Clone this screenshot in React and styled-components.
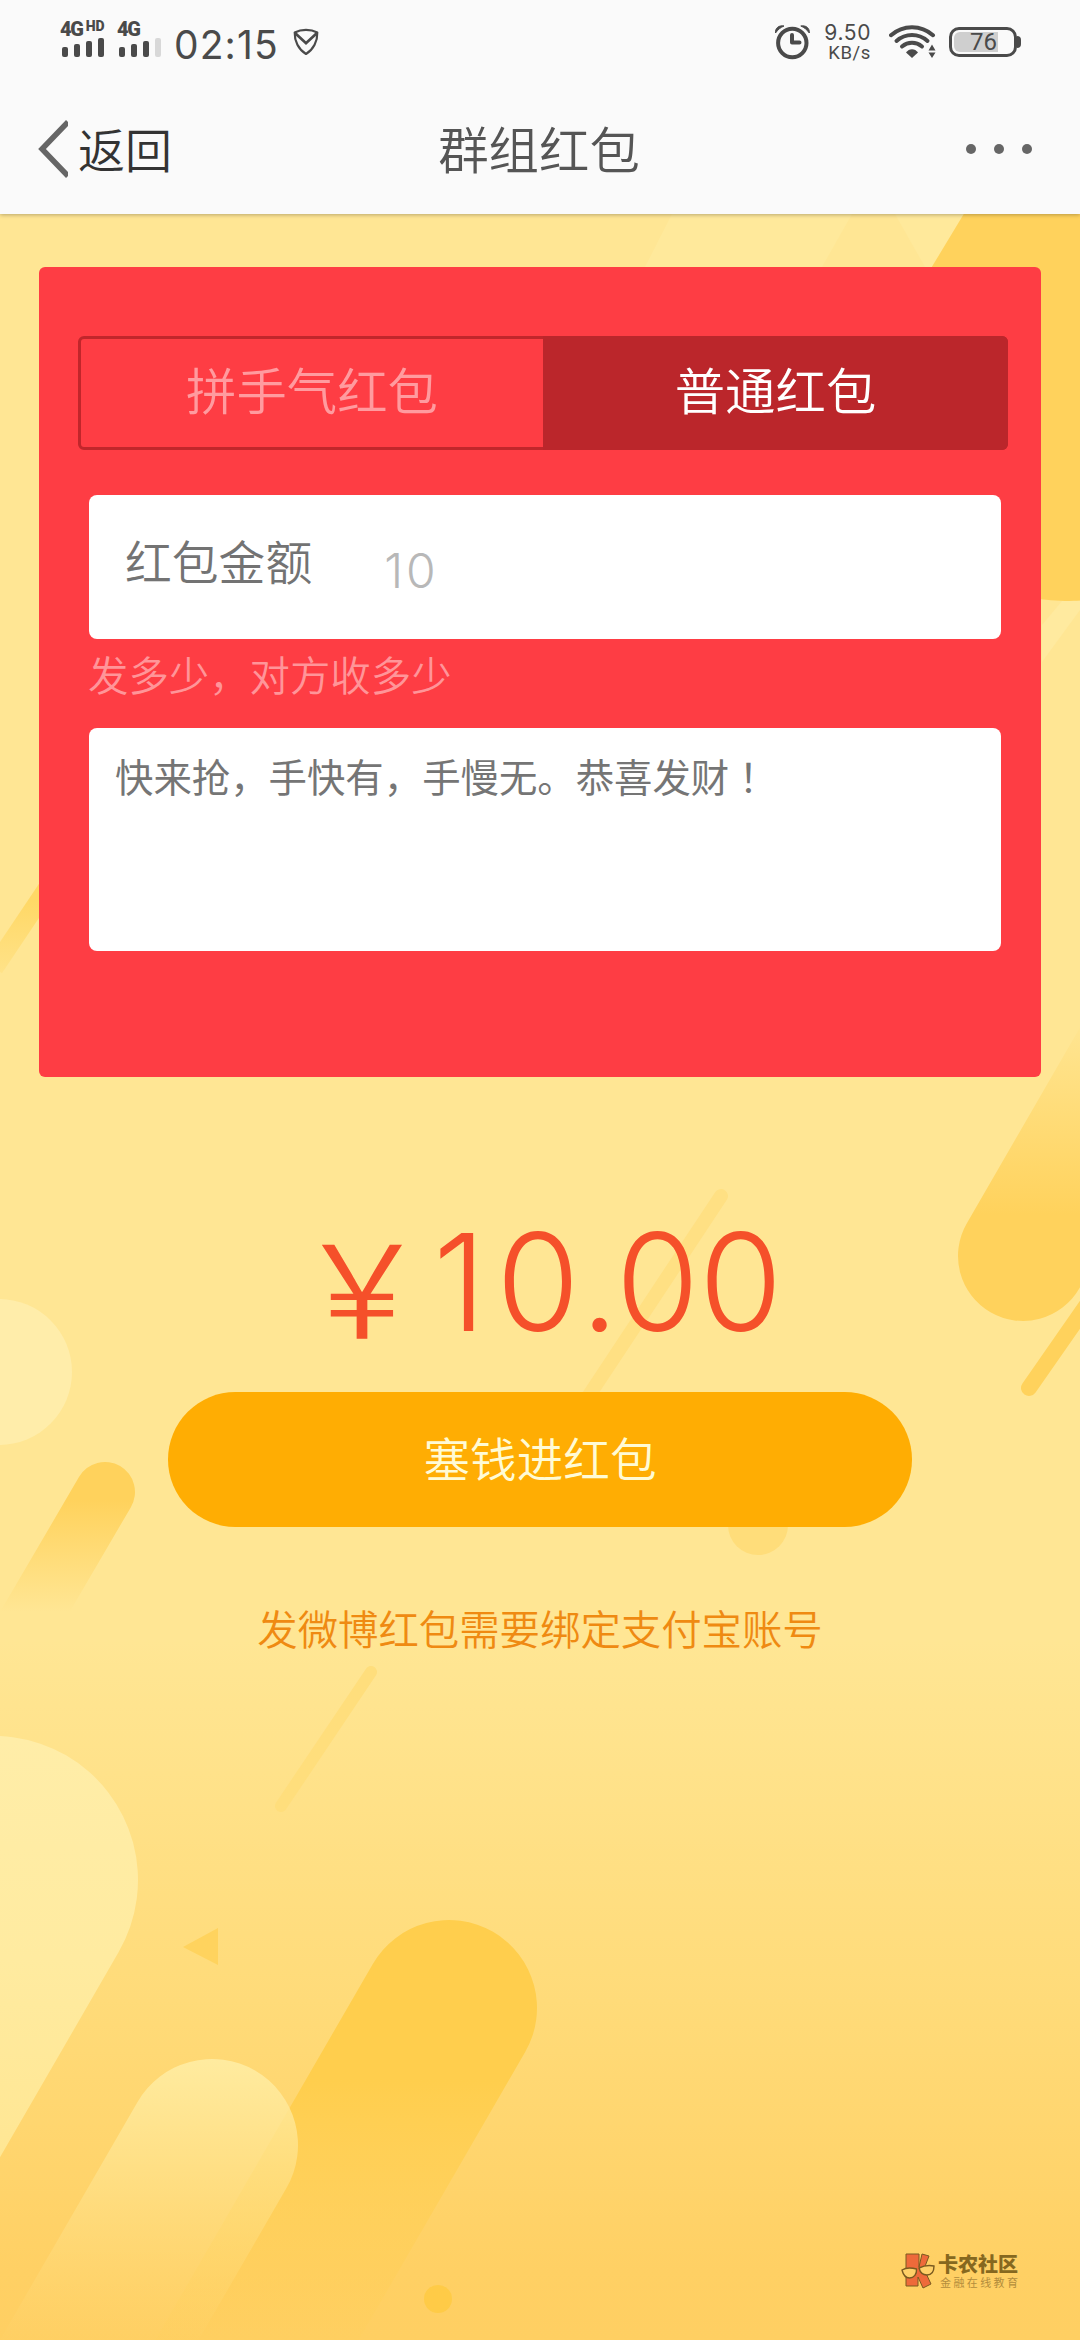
import React from "react";
import styled, { createGlobalStyle } from "styled-components";

const GlobalStyle = createGlobalStyle`
  * {
    box-sizing: border-box;
  }
  body {
    margin: 0;
    font-family: "Noto Sans CJK SC", sans-serif;
  }
`;

const Backdrop = () => (
  <BackdropSvg viewBox="0 0 1080 2340" fill="none">
    <defs>
      <linearGradient id="fadeRight" gradientUnits="userSpaceOnUse" x1="0" y1="1025" x2="0" y2="1215">
        <stop offset="0" stopColor="#ffd25c" stopOpacity="0.05" />
        <stop offset="1" stopColor="#ffd25c" />
      </linearGradient>
      <linearGradient id="fadeLine" gradientUnits="userSpaceOnUse" x1="0" y1="900" x2="0" y2="980">
        <stop offset="0" stopColor="#ffd866" />
        <stop offset="1" stopColor="#ffd866" stopOpacity="0.2" />
      </linearGradient>
      <linearGradient id="fadeSmall" gradientUnits="userSpaceOnUse" x1="0" y1="1500" x2="0" y2="1612">
        <stop offset="0" stopColor="#ffd25c" />
        <stop offset="1" stopColor="#ffd25c" stopOpacity="0" />
      </linearGradient>
      <linearGradient id="fadeBig" gradientUnits="userSpaceOnUse" x1="0" y1="1736" x2="0" y2="2180">
        <stop offset="0" stopColor="#ffeda8" />
        <stop offset="0.5" stopColor="#ffeba0" />
        <stop offset="1" stopColor="#ffe692" />
      </linearGradient>
      <linearGradient id="fadeLight" gradientUnits="userSpaceOnUse" x1="0" y1="2060" x2="0" y2="2350">
        <stop offset="0" stopColor="#ffeb9f" />
        <stop offset="1" stopColor="#ffdd80" stopOpacity="0" />
      </linearGradient>
      <linearGradient id="fadeDark" gradientUnits="userSpaceOnUse" x1="0" y1="2080" x2="0" y2="2350">
        <stop offset="0" stopColor="#ffce4d" />
        <stop offset="1" stopColor="#ffce55" stopOpacity="0.1" />
      </linearGradient>
    </defs>
    <path d="M672 214H852L822 267H645Z" fill="#ffe99b" />
    <path d="M895 214H964L932 267H925Z" fill="#ffe99b" />
    <path d="M1042 625L1062 601H1080V610L1042 662Z" fill="#ffea9f" />
    <path d="M1065 412L1375 -101" stroke="#ffd25c" strokeWidth="378" strokeLinecap="round" />
    <path d="M61 868L-6 968" stroke="url(#fadeLine)" strokeWidth="19" />
    <path d="M1023 1256L1223 910" stroke="url(#fadeRight)" strokeWidth="130" strokeLinecap="round" />
    <path d="M1029 1388L1109 1273" stroke="#ffd25c" strokeWidth="16" strokeLinecap="round" />
    <path d="M721 1196L570 1424" stroke="#ffe083" strokeWidth="14" strokeLinecap="round" />
    <circle cx="-1" cy="1372" r="73" fill="#ffedaa" />
    <path d="M105 1492L5 1663" stroke="url(#fadeSmall)" strokeWidth="60" strokeLinecap="round" />
    <circle cx="758" cy="1525" r="30" fill="#ffdd7a" />
    <path d="M371 1672L281 1806" stroke="#ffde7c" strokeWidth="12" strokeLinecap="round" />
    <path d="M-6 1880L-206 2226" stroke="url(#fadeBig)" strokeWidth="288" strokeLinecap="round" />
    <path d="M183 1947L218 1928V1965Z" fill="#ffd35e" />
    <path d="M449 2008L209 2423" stroke="url(#fadeDark)" strokeWidth="176" strokeLinecap="round" />
    <path d="M212 2145L12 2491" stroke="url(#fadeLight)" strokeWidth="172" strokeLinecap="round" />
    <circle cx="438" cy="2299" r="14" fill="#ffcb47" />
  </BackdropSvg>
);

const Signal = ({ label, hd, weak }) => (
  <SignalBox>
    <SignalLabel>
      {label}
      {hd && <sup>HD</sup>}
    </SignalLabel>
    <svg width="44" height="21" viewBox="0 0 44 21" fill="#4a4a4a">
      <rect x="1" y="10" width="6" height="10" rx="2" />
      <rect x="13" y="7" width="6" height="13" rx="2" />
      <rect x="25" y="4" width="6" height="16" rx="2" />
      <rect x="37" y="1" width="6" height="19" rx="2" fill={weak ? "#d8d8d8" : "#4a4a4a"} />
    </svg>
  </SignalBox>
);

const ShieldIcon = () => (
  <svg width="26" height="28" viewBox="0 0 26 28" fill="none" stroke="#4a4a4a" strokeWidth="2.2">
    <path d="M13 1.8C17 1.8 21 2.7 24.3 4.4C24.6 13 20.5 21.5 13 26C5.5 21.5 1.4 13 1.7 4.4C5 2.7 9 1.8 13 1.8Z" strokeLinejoin="round" />
    <path d="M2 5L13 15.2L24 5" strokeWidth="2.8" />
  </svg>
);

const AlarmIcon = () => (
  <svg width="35" height="35" viewBox="0 0 35 35" fill="none" stroke="#4a4a4a">
    <circle cx="17.3" cy="18" r="14.2" strokeWidth="4" />
    <path d="M17 10V17.5H24.5" strokeWidth="4" strokeLinecap="round" strokeLinejoin="round" />
    <path d="M0.5 8C0 3 4 0 9 1C5.5 2.5 3 4.5 0.5 8Z" fill="#4a4a4a" />
    <path d="M34.3 8C34.8 3 30.8 0 25.8 1C29.3 2.5 31.8 4.5 34.3 8Z" fill="#4a4a4a" />
  </svg>
);

const WifiIcon = () => (
  <svg width="47" height="34" viewBox="0 0 47 34" fill="none" stroke="#4a4a4a" strokeWidth="4" strokeLinecap="round">
    <path d="M2 10.2C14 -0.5 32 -0.5 44 10.2" />
    <path d="M7.5 16C16.5 8 29.5 8 38.5 16" />
    <path d="M13 21.5C19 16.5 27 16.5 33 21.5" />
    <path d="M17 27.5C20 23 26 23 29 27.5L23 33Z" fill="#4a4a4a" stroke="none" />
    <path d="M39.5 25.5L43 19.5L46.5 25.5ZM39.5 27.5L43 33L46.5 27.5Z" fill="#4a4a4a" stroke="none" />
  </svg>
);

const BrandIcon = () => (
  <svg width="35" height="36" viewBox="0 0 35 36" stroke="#7a5a20" strokeWidth="1">
    <path d="M5 1H18V14L21 1L28 3L23 16L30 31L22 35L17 24V33H5Z" fill="#ee6a3a" />
    <path d="M1 17C5 14.5 10 14.5 15.5 16C16 21 13 25 8.5 25C4 25 2 21 1 17Z" fill="#ffd168" strokeWidth="1.4" />
    <path d="M18 15C23 12.5 28 12 33 13C33 18 31 22 26 22C21 22 19 19 18 15Z" fill="#ffd168" strokeWidth="1.4" />
  </svg>
);

const App = () => {
  return (
    <Page>
      <GlobalStyle />
      <Backdrop />

      <Header>
        <StatusBar>
          <StatusLeft>
            <Signal label="4G" hd />
            <Signal label="4G" weak />
            <Clock>02:15</Clock>
            <ShieldIcon />
          </StatusLeft>
          <StatusRight>
            <AlarmIcon />
            <Speed>
              <span>9.50</span>
              <small>KB/s</small>
            </Speed>
            <WifiIcon />
            <Battery>
              <BatteryFill>76</BatteryFill>
            </Battery>
          </StatusRight>
        </StatusBar>

        <NavBar>
          <Back>
            <svg width="30" height="58" viewBox="0 0 30 58" fill="none" stroke="#666" strokeWidth="5.5">
              <path d="M30 2L4 29L30 56" />
            </svg>
            <span>返回</span>
          </Back>
          <Title>群组红包</Title>
          <More>
            <Dot />
            <Dot />
            <Dot />
          </More>
        </NavBar>
      </Header>

      <Card>
        <Tabs>
          <Tab>拼手气红包</Tab>
          <Tab $active>普通红包</Tab>
        </Tabs>
        <AmountField>
          <label htmlFor="amount">红包金额</label>
          <AmountInput id="amount" defaultValue="10" />
        </AmountField>
        <Hint>发多少，对方收多少</Hint>
        <Message>
          快来抢，手快有，手慢无。恭喜发财<Mark>！</Mark>
        </Message>
      </Card>

      <Total>
        <Yen>￥</Yen>
        <Tens>1</Tens>0<Point>.</Point>00
      </Total>
      <PayButton>塞钱进红包</PayButton>
      <BindTip>发微博红包需要绑定支付宝账号</BindTip>

      <Brand>
        <BrandIcon />
        <div>
          <BrandName>卡农社区</BrandName>
          <BrandSlogan>金融在线教育</BrandSlogan>
        </div>
      </Brand>
    </Page>
  );
};

const Page = styled.div`
  position: relative;
  display: flex;
  flex-direction: column;
  width: 1080px;
  height: 2340px;
  overflow: hidden;
  background: linear-gradient(#ffe694 0, #ffe694 1640px, #ffdb79 2000px, #ffd064 2270px, #ffcf62 2340px);
`;

const BackdropSvg = styled.svg`
  position: absolute;
  inset: 0;
  width: 1080px;
  height: 2340px;
`;

const Header = styled.header`
  position: relative;
  height: 214px;
  background: #fafafa;
  box-shadow: 0 1px 4px rgba(0, 0, 0, 0.28);
`;

const StatusBar = styled.div`
  display: flex;
  justify-content: space-between;
  height: 84px;
  padding: 0 63px 0 60px;
  color: #4a4a4a;
`;

const StatusLeft = styled.div`
  display: flex;
  align-items: center;
  svg {
    flex: none;
  }
`;

const StatusRight = styled.div`
  display: flex;
  align-items: center;
`;

const SignalBox = styled.div`
  width: 57px;
  height: 38px;
  margin-top: -6px;
  svg {
    display: block;
    margin-left: 1px;
  }
`;

const SignalLabel = styled.div`
  display: flex;
  height: 17px;
  font: 900 20px/18px "Roboto", sans-serif;
  letter-spacing: -1.3px;
  sup {
    margin-left: 3px;
    font-size: 14px;
    line-height: 13px;
    letter-spacing: 0;
  }
`;

const Clock = styled.span`
  width: 119px;
  margin-top: 5px;
  font: 400 39px/46px "Inter", sans-serif;
  letter-spacing: 1.1px;
`;

const Speed = styled.div`
  display: flex;
  flex-direction: column;
  align-items: flex-end;
  width: 61px;
  margin-right: 18px;
  font: 400 21px/22px "Inter", sans-serif;
  letter-spacing: 0.6px;
  small {
    font: 400 18.5px/18px "Roboto", sans-serif;
  }
`;

const Battery = styled.div`
  position: relative;
  width: 68px;
  height: 30px;
  margin-left: 13px;
  padding: 2px;
  border: 3px solid #4a4a4a;
  border-radius: 10px;
  &::after {
    content: "";
    position: absolute;
    top: 6px;
    right: -7px;
    width: 4px;
    height: 12px;
    border-radius: 0 4px 4px 0;
    background: #4a4a4a;
  }
`;

const BatteryFill = styled.div`
  width: 44px;
  height: 20px;
  padding-right: 1px;
  border-radius: 6px 0 0 6px;
  background: #cfcfcf;
  font: 400 24px/21px "Roboto", sans-serif;
  text-align: right;
`;

const NavBar = styled.nav`
  display: grid;
  grid-template-columns: 1fr auto 1fr;
  align-items: center;
  height: 130px;
  padding: 0 48px 0 46px;
`;

const Back = styled.div`
  display: flex;
  align-items: center;
  gap: 10px;
  margin-left: -8px;
  font-size: 47px;
  line-height: 60px;
  font-weight: 350;
  color: #333;
  span {
    margin-top: -3px;
  }
`;

const Title = styled.h1`
  margin: -3px 0 0;
  font-size: 50.4px;
  line-height: 60px;
  font-weight: 350;
  color: #555;
`;

const More = styled.div`
  display: flex;
  justify-content: flex-end;
  gap: 18px;
`;

const Dot = styled.i`
  width: 10px;
  height: 10px;
  border-radius: 50%;
  background: #666;
`;

const Card = styled.section`
  position: relative;
  width: 1002px;
  height: 810px;
  margin: 53px 39px 0;
  padding: 69px 33px 0 39px;
  border-radius: 6px;
  background: #fe3d44;
`;

const Tabs = styled.div`
  display: flex;
  height: 114px;
  border: 3px solid #c1262b;
  border-radius: 6px;
  background: #fe3d44;
`;

const Tab = styled.div`
  width: ${(props) => (props.$active ? "465px" : "462px")};
  flex: none;
  margin: ${(props) => (props.$active ? "-3px -3px -3px 0" : "0")};
  border-radius: ${(props) => (props.$active ? "0 6px 6px 0" : "0")};
  background: ${(props) => (props.$active ? "#bb262b" : "transparent")};
  padding-top: ${(props) => (props.$active ? "3px" : "0")};
  color: ${(props) => (props.$active ? "#fff" : "#ff9b9f")};
  font-size: 50.4px;
  line-height: 99px;
  font-weight: 350;
  text-align: center;
`;

const AmountField = styled.div`
  display: flex;
  width: 912px;
  height: 144px;
  margin: 45px 0 0 11px;
  padding-left: 36px;
  border-radius: 8px;
  background: #fff;
  color: #737373;
  font-size: 46.8px;
  line-height: 130px;
  font-weight: 350;
`;

const AmountInput = styled.input`
  width: 400px;
  margin-left: 72px;
  padding: 7px 0 0;
  border: 0;
  outline: 0;
  background: transparent;
  color: #b8b8b8;
  font: 300 48px/60px "Inter", sans-serif;
  letter-spacing: 3px;
`;

const Hint = styled.p`
  margin: 0 0 0 10px;
  height: 89px;
  color: #ff9599;
  font-size: 40.4px;
  line-height: 69px;
  font-weight: 350;
`;

const Message = styled.div`
  width: 912px;
  height: 223px;
  margin-left: 11px;
  padding: 18px 26px;
  border-radius: 8px;
  background: #fff;
  color: #757575;
  font-size: 38.4px;
  line-height: 58px;
`;

const Mark = styled.span`
  font-family: "Noto Sans CJK TC", sans-serif;
`;

const Total = styled.div`
  position: relative;
  display: flex;
  height: 170px;
  margin: 120px 0 0 297px;
  color: #f5502a;
  font: 350 135px/170px "Inter", sans-serif;
`;

const Yen = styled.span`
  width: 136px;
  margin-top: -1px;
  font-family: "Noto Sans CJK SC", sans-serif;
  font-size: 130px;
  font-weight: 350;
`;

const Tens = styled.span`
  margin-right: 10px;
`;

const Point = styled.span`
  margin: 0 -3px 0 1px;
`;

const PayButton = styled.button`
  position: relative;
  align-self: center;
  width: 744px;
  height: 135px;
  margin-top: 25px;
  padding: 0 0 6px;
  border: 0;
  border-radius: 68px;
  background: #ffad03;
  color: #fffbd5;
  font: 350 46.6px/129px "Noto Sans CJK SC", sans-serif;
`;

const BindTip = styled.p`
  position: relative;
  margin: 71px 0 0;
  color: #ef8a12;
  font-size: 40.4px;
  line-height: 60px;
  font-weight: 350;
  text-align: center;
`;

const Brand = styled.footer`
  position: relative;
  display: flex;
  gap: 2px;
  margin: auto 0 50px 901px;
`;

const BrandName = styled.div`
  color: #86681f;
  font-size: 20px;
  line-height: 21px;
  font-weight: 900;
`;

const BrandSlogan = styled.div`
  padding-left: 2px;
  color: #b38d3c;
  font-size: 11px;
  line-height: 16px;
  letter-spacing: 2.4px;
`;

export default App;
